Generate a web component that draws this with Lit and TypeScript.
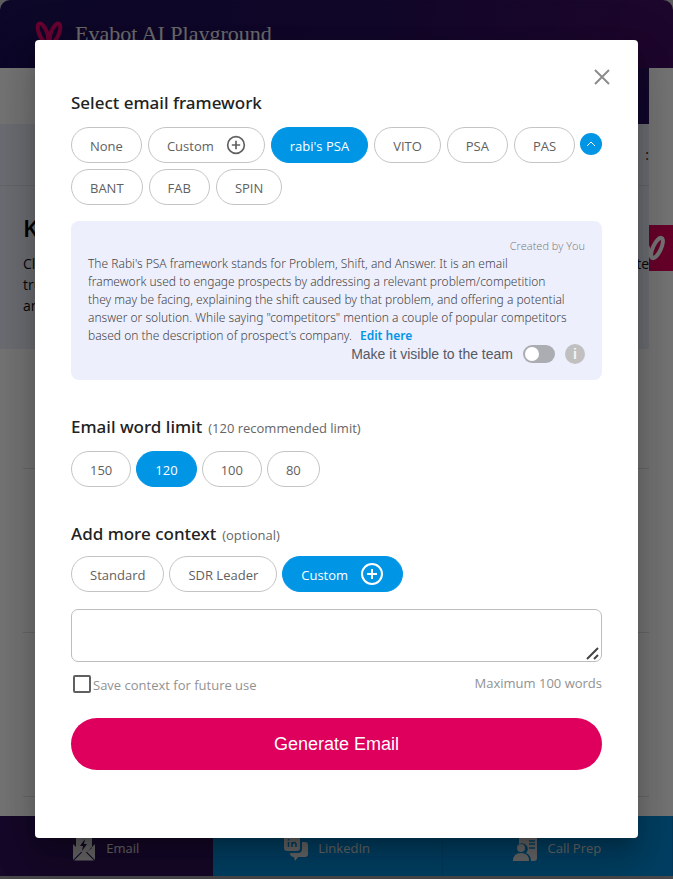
import { LitElement, html, css, svg, nothing } from "lit";
import { customElement, property, state } from "lit/decorators.js";
import { classMap } from "lit/directives/class-map.js";

const plusIcon = svg`<circle cx="12" cy="12" r="10"/><path d="M12 7v10M7 12h10"/>`;

@customElement("choice-chip")
class ChoiceChip extends LitElement {
  @property() label = "";
  @property({ type: Boolean }) selected = false;
  @property({ type: Boolean }) plus = false;

  static styles = css`
    :host { display: block; }
    .chip {
      display: flex; align-items: center; gap: 12px;
      height: 36px; padding: 2px 18px 0; box-sizing: border-box;
      border: 1px solid #c4c4c4; border-radius: 18px; background: #fff;
      font: 400 13px "Open Sans", "Noto Sans", sans-serif; color: #616161;
      white-space: nowrap; cursor: pointer;
    }
    .selected { background: #0095e5; border-color: #0095e5; color: #fff; font-weight: 500; }
    .icon {
      width: 20px; height: 20px; margin-top: -2px;
      fill: none; stroke: currentColor; stroke-width: 2;
    }
    .selected .icon { width: 24px; height: 24px; }
  `;

  render() {
    return html`<button type="button" aria-pressed=${this.selected}
      class=${classMap({ chip: true, selected: this.selected })}>
      <span>${this.label}</span>
      ${this.plus ? html`<svg class="icon" viewBox="0 0 24 24" aria-hidden="true">${plusIcon}</svg>` : nothing}
    </button>`;
  }
}

@customElement("app-root")
class AppRoot extends LitElement {
  @state() framework = "rabi's PSA";
  @state() limit = "120";
  @state() context = "Custom";

  static styles = css`
    :host {
      display: block; position: relative; min-height: 100vh;
      font-family: "Open Sans", "Noto Sans", sans-serif; color: #222;
    }
    *, *::before, *::after { box-sizing: border-box; }
    h1, h2, p { margin: 0; }

    .page { display: flex; flex-direction: column; min-height: 100vh; background: #c8c8cc; overflow: hidden; }
    .header {
      display: flex; align-items: center; gap: 12px; height: 68px; padding: 0 35px;
      border-radius: 10px 10px 0 0;
      background: linear-gradient(100deg, #1c1158 0%, #26105a 55%, #420f60 100%);
    }
    .brand { width: 28px; height: 26px; }
    .title { font: 400 22px "Liberation Serif", "Times New Roman", serif; color: #e8e8e8; }
    .body { flex: 1; display: grid; grid-template-columns: 1fr 24px; background: #fcfcfc; }
    .strip { height: 56px; background: linear-gradient(90deg, #fcfcfc 50%, #28125e 50%); }
    .band { height: 225px; background: #eceef8; }
    .bandtop { display: flex; justify-content: flex-end; align-items: center; height: 62px; border-bottom: 1px solid #dcdde4; font-size: 14px; }
    .intro { padding: 25px 0 0 23px; }
    .introhead { font-size: 24px; font-weight: 600; line-height: 34px; color: #000; }
    .introtext { display: flex; justify-content: space-between; padding-top: 8px; font-size: 14px; line-height: 21px; color: #111; }
    .rows { padding-left: 23px; }
    .row { height: 164px; border-bottom: 1px solid #e0e0e0; }
    .row:first-child { height: 120px; }
    .rail { padding-top: 157px; background: #fcfcfc; }
    .railtab { display: block; width: 24px; height: 46px; background: #e0005c; }
    .tabs { display: grid; grid-template-columns: 12fr 13fr 13fr; height: 60px; background: #008ad6; }
    .tab {
      display: flex; align-items: center; justify-content: center; gap: 10px; padding-top: 3px;
      font-size: 13px; color: #e0e0e0; text-decoration: none; border-right: 1px solid #007cc4;
    }
    .tab.active { background: #2e1258; border-right-color: #2e1258; }
    .tabicon { width: 24px; height: 26px; }
    .edge { height: 3px; background: #a0a0a4; }

    .overlay { position: absolute; inset: 0; padding: 40px 35px; background: rgba(0, 0, 0, 0.54); }
    .dialog {
      padding: 27px 36px 68px; border-radius: 4px; background: #fff;
      box-shadow: 0 11px 15px -7px rgba(0, 0, 0, 0.2), 0 24px 38px 3px rgba(0, 0, 0, 0.14), 0 9px 46px 8px rgba(0, 0, 0, 0.12);
    }
    .top { display: flex; justify-content: flex-end; height: 20px; margin-right: -10px; }
    .close { display: flex; width: 20px; height: 20px; padding: 0; border: 0; background: none; cursor: pointer; }
    .closeicon { width: 20px; height: 20px; fill: none; stroke: #8c8c8c; stroke-width: 2; }
    .heading { display: flex; align-items: baseline; gap: 6px; font: 500 17px "Noto Sans", "Open Sans", sans-serif; line-height: 24px; }
    .hint { font: 400 13px "Open Sans", sans-serif; color: #666; }
    .chips { display: flex; flex-wrap: wrap; gap: 6px; }
    .first { padding-top: 4px; }
    .wide { display: grid; grid-template-columns: 1fr 22px; padding-top: 12px; }
    .fold { display: flex; align-items: center; justify-content: center; width: 22px; height: 22px; margin-top: 6px; padding: 0; border: 0; border-radius: 50%; background: #0095e5; cursor: pointer; }
    .foldicon { width: 12px; height: 12px; fill: none; stroke: #fff; stroke-width: 1; }

    .panel { margin-top: 16px; padding: 16px 17px 18px; border-radius: 8px; background: #eeeffc; }
    .author { font-size: 11px; font-weight: 300; line-height: 18px; text-align: right; color: #777; }
    .about { font: 300 12px "Noto Sans", "Open Sans", sans-serif; line-height: 18px; color: #444; white-space: nowrap; }
    .edit { margin-left: 5px; font-weight: 600; color: #0095e5; text-decoration: none; }
    .share { display: flex; align-items: center; justify-content: flex-end; gap: 10px; height: 17px; font: 14px "Liberation Sans", Arial, sans-serif; color: #555a66; }
    .switch { display: flex; align-items: center; gap: 10px; }
    .toggle { appearance: none; width: 32px; height: 18px; margin: 0; padding: 2px; border-radius: 9px; background: #acadb3; cursor: pointer; }
    .toggle::before { content: ""; display: block; width: 14px; height: 14px; border-radius: 50%; background: #fff; }
    .toggle:checked::before { margin-left: 14px; }
    .info { width: 20px; height: 20px; padding: 0; border: 0; border-radius: 50%; background: #c0c0c0; font: 700 14px "Liberation Sans", Arial, sans-serif; line-height: 20px; color: #f4f4f4; }

    .section { padding-top: 35px; }
    .section .chips { padding-top: 12px; gap: 5px; }
    .context .chips { padding-top: 10px; }
    .box { position: relative; display: flex; margin-top: 17px; }
    .field { width: 100%; height: 53px; padding: 8px; border: 1px solid #bdbdbd; border-radius: 7px; resize: none; font: 13px "Open Sans", sans-serif; }
    .grip { position: absolute; right: 2px; bottom: 1px; width: 14px; height: 14px; stroke: #444; stroke-width: 2; }
    .meta { display: flex; justify-content: space-between; padding: 11px 0 0 2px; font-size: 13px; line-height: 20px; color: #929292; }
    .save { display: flex; align-items: center; gap: 2px; padding-top: 2px; }
    .check { appearance: none; width: 18px; height: 18px; margin: 0 0 2px; border: 2px solid #606060; border-radius: 2px; }
    .go { display: block; width: 100%; height: 52px; margin-top: 23px; border: 0; border-radius: 26px; background: #de005c; color: #fff; font: 18px "Liberation Sans", Arial, sans-serif; cursor: pointer; }
  `;

  private chips(names: string[], key: "framework" | "limit" | "context") {
    return names.map((name) => html`<choice-chip .label=${name} ?plus=${name === "Custom"}
      ?selected=${this[key] === name} @click=${() => { this[key] = name; }}></choice-chip>`);
  }

  render() {
    return html`
      <div class="page">
        <header class="header">
          <svg class="brand" viewBox="0 0 28 26" fill="none" stroke="#e5006a" stroke-width="4" aria-hidden="true">
            <ellipse cx="8" cy="12" rx="4" ry="10" transform="rotate(-22 8 12)"/>
            <ellipse cx="20" cy="12" rx="4" ry="10" transform="rotate(22 20 12)"/>
          </svg>
          <h1 class="title">Evabot AI Playground</h1>
        </header>
        <main class="body">
          <div>
            <div class="strip"></div>
            <section class="band">
              <div class="bandtop">:</div>
              <div class="intro">
                <h2 class="introhead">K</h2>
                <div class="introtext"><p>Cl<br>tru<br>an</p><p>te</p></div>
              </div>
            </section>
            <div class="rows"><div class="row"></div><div class="row"></div><div class="row"></div></div>
          </div>
          <aside class="rail">
            <svg class="railtab" viewBox="0 0 24 46" fill="none" stroke="#fff" stroke-width="4" aria-hidden="true">
              <ellipse cx="8" cy="23" rx="4" ry="11" transform="rotate(25 8 23)"/>
              <path d="M-3 19C0 24 1 28 3 33"/>
            </svg>
          </aside>
        </main>
        <nav class="tabs">
          <a class="tab active" href="#email">
            <svg class="tabicon" viewBox="0 0 24 26" fill="#e0e0e0" aria-hidden="true">
              <path d="M4 2h16v11l-8 6-8-6zM1 9l8 8-8 8zM23 9l-8 8 8 8zM2 25.500l8-8 2 1.500 2-1.500 8 8z"/>
              <path d="M13 4 8 11h3l-1 5 5-7h-3z" fill="#2e1258"/>
            </svg>Email</a>
          <a class="tab" href="#linkedin">
            <svg class="tabicon" viewBox="0 0 24 26" fill="#e0e0e0" aria-hidden="true">
              <path d="M18 7h3q3 0 3 3v9q0 3-3 3h-7l-3 4-1-4q-4 0-4-4h8q4 0 4-4z"/>
              <path d="M3 1h10q3 0 3 3v9q0 3-3 3H3q-3 0-3-3V4q0-3 3-3z"/>
              <path d="M4.500 7v5M8 12V7m0 2q3-3 4 0v3M4.500 4v1.500" fill="none" stroke="#008ad6" stroke-width="1.500"/>
            </svg>LinkedIn</a>
          <a class="tab" href="#call-prep">
            <svg class="tabicon" viewBox="0 0 24 26" fill="#e0e0e0" aria-hidden="true">
              <path d="M6 1h18v22q0 3-3 3h-3q0-6-5-8 3-3 1-7-3-4-8-2z"/>
              <path d="M16 6h6M16 9h6M16 13h6" stroke="#008ad6" stroke-width="1.500"/>
              <circle cx="8" cy="13" r="4"/><path d="M0 26q0-8 8-8t8 8z"/>
            </svg>Call Prep</a>
        </nav>
        <div class="edge"></div>
      </div>

      <div class="overlay">
        <form class="dialog" role="dialog" aria-label="Generate email" @submit=${(e: Event) => e.preventDefault()}>
          <div class="top">
            <button class="close" type="button" aria-label="Close">
              <svg class="closeicon" viewBox="0 0 20 20"><path d="M3 3l14 14M17 3 3 17"/></svg>
            </button>
          </div>
          <section class="first">
            <h2 class="heading">Select email framework</h2>
            <div class="wide">
              <div class="chips">${this.chips(["None", "Custom", "rabi's PSA", "VITO", "PSA", "PAS", "BANT", "FAB", "SPIN"], "framework")}</div>
              <button class="fold" type="button" aria-label="Show fewer">
                <svg class="foldicon" viewBox="0 0 12 12"><path d="M2 8l4-4 4 4"/></svg>
              </button>
            </div>
          </section>
          <div class="panel">
            <p class="author">Created by You</p>
            <p class="about">The Rabi's PSA framework stands for Problem, Shift, and Answer. It is an email<br>
              framework used to engage prospects by addressing a relevant problem/competition<br>
              they may be facing, explaining the shift caused by that problem, and offering a potential<br>
              answer or solution. While saying "competitors" mention a couple of popular competitors<br>
              based on the description of prospect's company. <a class="edit" href="#edit">Edit here</a></p>
            <div class="share">
              <label class="switch">Make it visible to the team<input class="toggle" type="checkbox" role="switch"></label>
              <button class="info" type="button" aria-label="About team visibility">i</button>
            </div>
          </div>
          <section class="section">
            <h2 class="heading">Email word limit <span class="hint">(120 recommended limit)</span></h2>
            <div class="chips">${this.chips(["150", "120", "100", "80"], "limit")}</div>
          </section>
          <section class="section context">
            <h2 class="heading">Add more context <span class="hint">(optional)</span></h2>
            <div class="chips">${this.chips(["Standard", "SDR Leader", "Custom"], "context")}</div>
          </section>
          <div class="box">
            <textarea class="field" aria-label="Context"></textarea>
            <svg class="grip" viewBox="0 0 14 14" aria-hidden="true"><path d="M1 12 12 1M8 12l4-4"/></svg>
          </div>
          <div class="meta">
            <label class="save"><input class="check" type="checkbox">Save context for future use</label>
            <span>Maximum 100 words</span>
          </div>
          <button class="go" type="submit">Generate Email</button>
        </form>
      </div>`;
  }
}
